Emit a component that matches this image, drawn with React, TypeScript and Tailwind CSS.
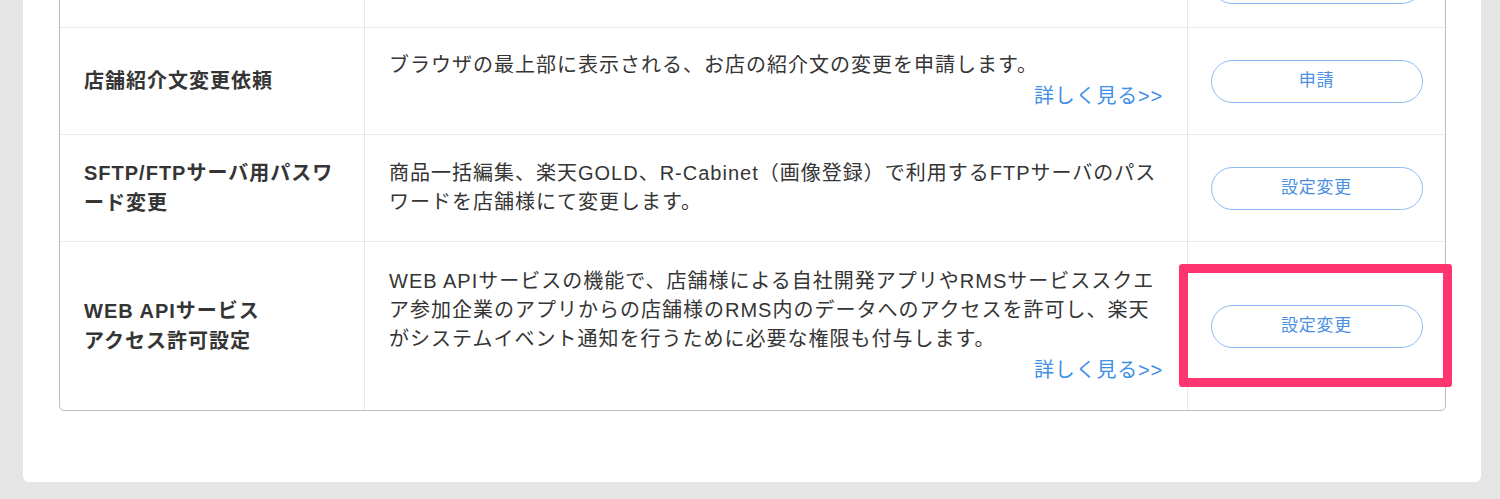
import React from "react";

type SettingRow = {
  title: React.ReactNode;
  body?: React.ReactNode;
  more?: boolean;
  action: string;
  highlight?: boolean;
  heightClass: string;
  last?: boolean;
};

// first row is scrolled mostly out of view; only the button's lower edge shows
const rows: SettingRow[] = [
  {
    title: "",
    action: "",
    heightClass: "h-[91px]",
  },
  {
    title: "店舗紹介文変更依頼",
    body: <>ブラウザの最上部に表示される、お店の紹介文の変更を申請します。</>,
    more: true,
    action: "申請",
    heightClass: "h-[107px]",
  },
  {
    title: (
      <>
        SFTP/FTPサーバ用パスワ
        <br />
        ード変更
      </>
    ),
    body: (
      <>
        商品一括編集、楽天GOLD、R-Cabinet（画像登録）で利用するFTPサーバのパス
        <br />
        ワードを店舗様にて変更します。
      </>
    ),
    action: "設定変更",
    heightClass: "h-[107px]",
  },
  {
    title: (
      <>
        WEB APIサービス
        <br />
        アクセス許可設定
      </>
    ),
    body: (
      <>
        WEB APIサービスの機能で、店舗様による自社開発アプリやRMSサービススクエ
        <br />
        ア参加企業のアプリからの店舗様のRMS内のデータへのアクセスを許可し、楽天
        <br />
        がシステムイベント通知を行うために必要な権限も付与します。
      </>
    ),
    more: true,
    action: "設定変更",
    highlight: true,
    heightClass: "h-[168px]",
    last: true,
  },
];

const App: React.FC = () => {
  return (
    <div className="h-[499px] overflow-hidden bg-[#e5e5e5] font-['Liberation_Sans','Noto_Sans_CJK_JP',sans-serif] tracking-[1px] text-[#353535]">
      <div className="-mt-[64px] ml-[23px] mr-[19px] rounded-[6px] bg-white pb-[71px] pl-[36px] pr-[35px]">
        <div className="rounded-[5px] border border-[#bdbdbd]">
          {rows.map((row, i) => (
            <div
              key={i}
              className={`grid grid-cols-[305px_823px_1fr] ${row.heightClass} ${
                row.last ? "" : "border-b border-[#ebebeb]"
              }`}
            >
              <div className="flex items-center border-r border-[#e8e8e8] px-6 text-[20px] font-bold leading-[30px] whitespace-nowrap">
                <p>{row.title}</p>
              </div>
              <div className="flex flex-col justify-center border-r border-[#e8e8e8] px-6 text-[20px] leading-[29px] whitespace-nowrap">
                {row.body && <p>{row.body}</p>}
                {row.more && (
                  <a className="mt-[2px] block text-right tracking-[0.8px] text-[#3f8fe7]">
                    詳しく見る&gt;&gt;
                  </a>
                )}
              </div>
              <div className="relative flex items-center justify-center">
                <button
                  type="button"
                  className="h-[43px] w-[212px] rounded-full border border-[#8dbcf4] bg-white text-[17px] tracking-[0.8px] text-[#4a90e2]"
                >
                  {row.action}
                </button>
                {row.highlight && (
                  <span
                    aria-hidden
                    className="pointer-events-none absolute -left-[9px] -right-[7px] top-[22px] bottom-[23px] rounded-[3px] border-[9px] border-[#fe3570]"
                  />
                )}
              </div>
            </div>
          ))}
        </div>
      </div>
    </div>
  );
};

export default App;
